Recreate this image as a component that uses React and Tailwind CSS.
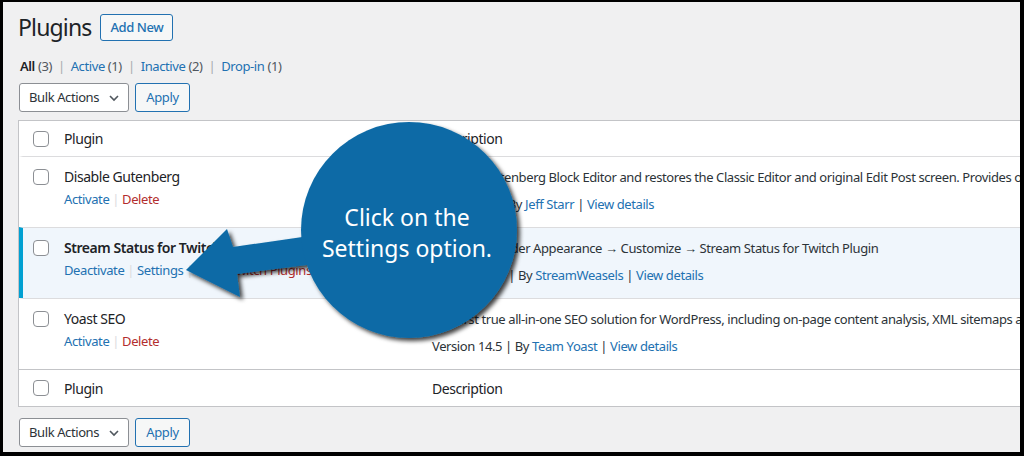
const font = { fontFamily: '"Noto Sans", "Open Sans", Arial, sans-serif' };

const Checkbox = () => (
  <span className="block w-4 h-4 rounded-[4px] border border-[#8c8f94] bg-white" />
);

const BulkBar = () => (
  <div className="flex items-center gap-[6px] h-[29px]">
    <div className="h-[29px] w-[110px] flex items-center justify-between pl-[9px] pr-[8px] bg-white border border-[#8c8f94] rounded-[3px] text-[13px] tracking-[-0.4px] text-[#2c3338]">
      <span>Bulk Actions</span>
      <svg width="12" height="12" viewBox="0 0 12 12" fill="none" stroke="#50575e" strokeWidth="1.6">
        <path d="M2 4l4 4 4-4" />
      </svg>
    </div>
    <button className="h-[29px] w-[55px] bg-[#f6f7f7] border border-[#2271b1] rounded-[3px] text-[13px] tracking-[-0.4px] text-[#2271b1]">
      Apply
    </button>
  </div>
);

const Sep = () => <span className="text-[#dcdcde] px-[3px]">|</span>;

const plugins = [
  {
    name: "Disable Gutenberg",
    actions: [
      ["Activate", "text-[#2271b1]"],
      ["Delete", "text-[#b32d2e]"],
    ],
    desc: "Disables Gutenberg Block Editor and restores the Classic Editor and original Edit Post screen. Provides options to enable on specific post types, user roles, and more.",
    version: "Version 2.2",
    author: "Jeff Starr",
  },
  {
    name: "Stream Status for Twitch",
    active: true,
    actions: [
      ["Deactivate", "text-[#2271b1]"],
      ["Settings", "text-[#2271b1]"],
      ["More Twitch Plugins", "text-[#b32d2e]"],
    ],
    desc: "Customize under Appearance → Customize → Stream Status for Twitch Plugin",
    version: "Version 1.2.0",
    author: "StreamWeasels",
  },
  {
    name: "Yoast SEO",
    actions: [
      ["Activate", "text-[#2271b1]"],
      ["Delete", "text-[#b32d2e]"],
    ],
    desc: "The first true all-in-one SEO solution for WordPress, including on-page content analysis, XML sitemaps and much more.",
    version: "Version 14.5",
    author: "Team Yoast",
  },
];

const Row = ({ p }) => (
  <div
    className={`flex h-[71px] border-t border-[#dcdcde] ${
      p.active ? "bg-[#f0f6fc] border-l-4 border-l-[#00a0d2]" : "bg-white border-l-4 border-l-transparent"
    }`}
  >
    <div className="w-[41px] shrink-0 pl-[10px] pt-[12px]">
      <Checkbox />
    </div>
    <div className="w-[368px] shrink-0 pt-[10px]">
      <div className={`text-[14px] tracking-[-0.45px] leading-[20px] text-[#1d2327] whitespace-nowrap ${p.active ? "font-semibold" : ""}`}>
        {p.name}
      </div>
      <div className="text-[13px] tracking-[-0.4px] leading-[20px] mt-[2px] whitespace-nowrap">
        {p.actions.map(([a, c], i) => (
          <span key={a}>
            {i > 0 && <Sep />}
            <span className={c}>{a}</span>
          </span>
        ))}
      </div>
    </div>
    <div className="pt-[10px] text-[13px] tracking-[-0.4px] text-[#2c3338] whitespace-nowrap">
      <div className="leading-[20px]">{p.desc}</div>
      <div className="leading-[20px] mt-[7px]">
        {p.version} <span>|</span> By <span className="text-[#2271b1]">{p.author}</span>{" "}
        <span>|</span> <span className="text-[#2271b1]">View details</span>
      </div>
    </div>
  </div>
);

const HeadRow = ({ className }) => (
  <div className={`flex items-center bg-white ${className}`}>
    <div className="w-[45px] shrink-0 pl-[14px]">
      <Checkbox />
    </div>
    <div className="w-[368px] shrink-0 text-[14px] tracking-[-0.45px] text-[#1d2327]">Plugin</div>
    <div className="text-[14px] tracking-[-0.45px] text-[#1d2327]">Description</div>
  </div>
);

export default function App() {
  return (
    <div className="relative w-[1024px] h-[456px] bg-black pt-[2px] pl-[3px] pr-[4px] pb-[4px]" style={font}>
      <div className="w-full h-full bg-[#f0f0f1] overflow-hidden pl-[15px]">
        <div className="flex items-center gap-[9px] pt-[11px]">
          <h1 className="text-[23px] tracking-[-0.85px] leading-[29px] text-[#1d2327]">Plugins</h1>
          <button className="h-[27px] px-[9px] border border-[#2271b1] rounded-[3px] bg-[#f6f7f7] text-[13px] tracking-[-0.4px] font-medium text-[#2271b1]">
            Add New
          </button>
        </div>

        <div className="mt-[14px] text-[13px] tracking-[-0.4px] leading-[20px] text-[#50575e] pl-[2px] whitespace-nowrap">
          <span className="font-semibold text-[#1d2327]">All</span> (3)
          <span className="text-[#a7aaad] px-[6px]">|</span>
          <span className="text-[#2271b1]">Active</span> (1)
          <span className="text-[#a7aaad] px-[6px]">|</span>
          <span className="text-[#2271b1]">Inactive</span> (2)
          <span className="text-[#a7aaad] px-[6px]">|</span>
          <span className="text-[#2271b1]">Drop-in</span> (1)
        </div>

        <div className="mt-[7px] pl-[1px]">
          <BulkBar />
        </div>

        <div className="mt-[8px] w-[1100px] border border-[#c3c4c7] bg-white">
          <HeadRow className="h-[35px]" />
          {plugins.map((p) => (
            <Row key={p.name} p={p} />
          ))}
          <HeadRow className="h-[37px] border-t border-[#c3c4c7]" />
        </div>

        <div className="mt-[11px] pl-[1px]">
          <BulkBar />
        </div>
      </div>

      <svg className="absolute inset-0 pointer-events-none" width="1024" height="456" viewBox="0 0 1024 456">
        <defs>
          <filter id="sh" x="-20%" y="-20%" width="140%" height="140%">
            <feDropShadow dx="3" dy="3" stdDeviation="2" floodColor="#000" floodOpacity="0.75" />
          </filter>
        </defs>
        <g filter="url(#sh)" fill="#0b6aa6">
          <polygon points="186,270 227,229 233,247 330,233 330,262 237,274 240,297" />
          <circle cx="409" cy="230" r="108" />
        </g>
        <g fill="#fff" fontSize="23" textAnchor="middle" style={font}>
          <text x="407" y="226">Click on the</text>
          <text x="407" y="257">Settings option.</text>
        </g>
      </svg>
    </div>
  );
}
